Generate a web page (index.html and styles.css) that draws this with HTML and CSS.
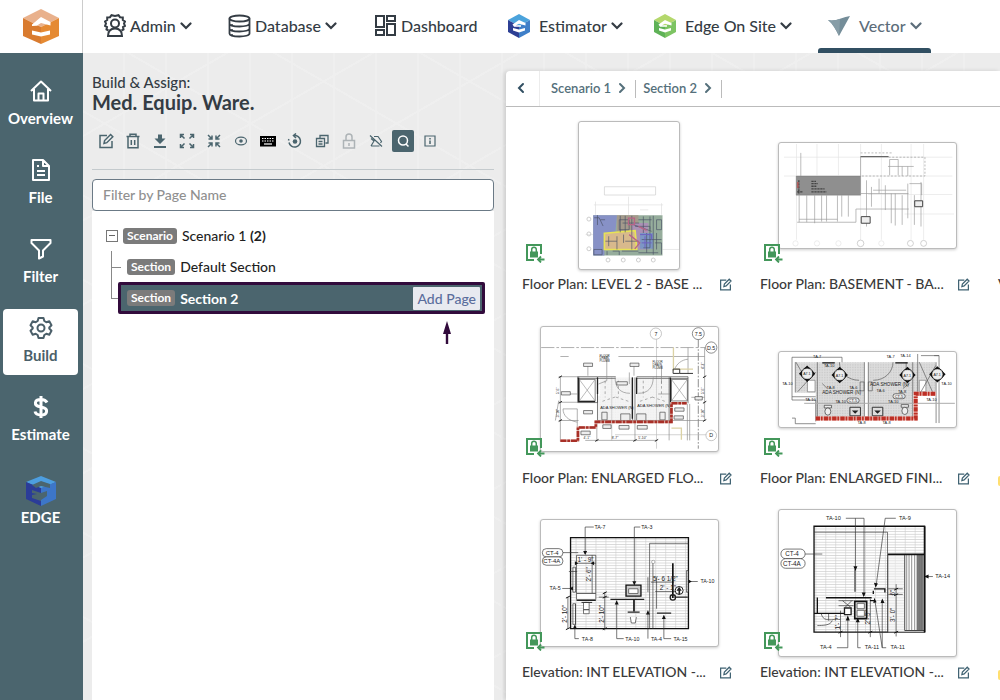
FILE: index.html
```html
<!DOCTYPE html>
<html lang="en">
<head>
<meta charset="utf-8">
<title>Build &amp; Assign</title>
<link rel="stylesheet" href="styles.css">
</head>
<body>
<svg class="defs" aria-hidden="true">
  <symbol id="chev" viewBox="0 0 12 8"><path d="M1.500 1.500 6 6l4.500-4.500" fill="none" stroke="currentColor" stroke-width="2.200" stroke-linecap="round"/></symbol>
  <symbol id="chev-right" viewBox="0 0 8 12"><path d="M2 2l4 4-4 4" fill="none" stroke="currentColor" stroke-width="2" stroke-linecap="round"/></symbol>
  <symbol id="edit" viewBox="0 0 16 16"><g fill="none" stroke="currentColor" stroke-width="1.500"><path d="M9 2.500H2v12h12V8"/><path d="M6 10.500l.6-3L12.600 1.500l2.200 2.200-6 6z"/></g></symbol>
  <symbol id="lock-in" viewBox="0 0 20 20"><path d="M9 17H2V2h14v9" fill="none" stroke="#43975a" stroke-width="2"/><path d="M5 8.500h8v6H5z" fill="#43975a"/><path d="M6.700 9V6.500a2.300 2.300 0 0 1 4.600 0V9" fill="none" stroke="#43975a" stroke-width="1.500"/><path d="M19.500 16.500H13M16 13.500l-3 3 3 3" fill="none" stroke="#43975a" stroke-width="1.800"/></symbol>
  <symbol id="mark" viewBox="0 0 24 24"><path d="M5.500 10.500 12 6l6.500 3v2.500L12 9.800l-3 1.500h5v1.400H7zM6 14l6 1.500 6-1.500v2.500L12 18.500 6 16.500z" fill="#fff"/></symbol>
  <pattern id="tile" width="30" height="8" patternUnits="userSpaceOnUse"><path d="M0 1h30" stroke="#aaa" stroke-width="1.500"/><path d="M1 0v8" stroke="#ccc" stroke-width="2"/></pattern>
  <pattern id="dots" width="5" height="5" patternUnits="userSpaceOnUse"><path d="M0 0h5v5H0z" fill="#dcdcdc"/><path d="M0 0h2v2H0z" fill="#bbb"/></pattern>
  <g id="target"><circle r="18" fill="#fff" stroke="#222" stroke-width="3"/><path d="M-25 0l10-10v20zM25 0 15-10v20zM0-25l-10 10h20zM0 25l-10-10h20z" fill="#111"/><circle r="16" fill="#eee" stroke="#333"/></g>
</svg>

<header class="top">
  <a class="brand" href="#" aria-label="Edge home">
    <svg width="38" height="36" viewBox="0 0 38 36"><path d="M19 0 37 9 19 18 1 9z" fill="#e9b18c"/><path d="M1 9l18 9v17L1 27z" fill="#d97b2f"/><path d="M37 9l-18 9v17l18-8z" fill="#e58a33"/><path d="M10 15.500 19 8l9.500 5v3.500L19 14l-4 2.500h4L10 17zM10 21.500l9 2 9-2v4l-9 2-9-2z" fill="#fff"/></svg>
  </a>
  <nav class="menu">
    <button class="menu-item"><svg width="22" height="24" viewBox="0 0 22 24" fill="none" stroke="currentColor" stroke-width="2"><path d="M4.500 16.500l-2-1 .5-2.500-2-1 1-2.500-1-2 2.200-1.500V3.500L6 3.200l1.500-2L11 2l3.500-.8 1.500 2 2.800.3V6L21 7.500l-1 2 1 2.500-2 1 .5 2.500-2 1"/><circle cx="11" cy="9.500" r="4"/><path d="M4 22c0-5 2.500-7.500 7-7.500s7 2.500 7 7.500z"/></svg><span>Admin</span><svg class="chev"><use href="#chev"/></svg></button>
    <button class="menu-item"><svg width="23" height="24" viewBox="0 0 23 24" fill="none" stroke="currentColor" stroke-width="1.800"><ellipse cx="11.500" cy="4.500" rx="10" ry="3"/><path d="M1.500 4.500v15c0 4 20 4 20 0v-15M1.500 9.500c0 4 20 4 20 0M1.500 14.500c0 4 20 4 20 0"/><path d="M4 10v1M4 15v1M4 20v1" stroke-width="1.500"/></svg><span>Database</span><svg class="chev"><use href="#chev"/></svg></button>
    <a class="menu-item" href="#"><svg width="23" height="23" viewBox="0 0 23 23" fill="none" stroke="currentColor" stroke-width="2"><path d="M2 2h8v11H2zM13 2h8v5h-8zM2 16h8v5H2zM13 10h8v11h-8z"/></svg><span>Dashboard</span></a>
    <button class="menu-item app"><svg width="24" height="24" viewBox="0 0 24 24"><path d="M12 0 23 6 12 12 1 6z" fill="#4ba3dc"/><path d="M1 6l11 6v12L1 18z" fill="#2d3f94"/><path d="M23 6l-11 6v12l11-6z" fill="#3f7fc8"/><use href="#mark"/></svg><span>Estimator</span><svg class="chev"><use href="#chev"/></svg></button>
    <button class="menu-item app"><svg width="24" height="24" viewBox="0 0 24 24"><path d="M12 0 23 6 12 12 1 6z" fill="#b4d86c"/><path d="M1 6l11 6v12L1 18z" fill="#5fb257"/><path d="M23 6l-11 6v12l11-6z" fill="#7dc463"/><use href="#mark"/></svg><span>Edge On Site</span><svg class="chev"><use href="#chev"/></svg></button>
    <button class="menu-item app active"><svg width="24" height="22" viewBox="0 0 24 22"><path d="M1 5c7 2 15-3 22-4L12 21C9 15 6 9 1 5z" fill="#748d99"/><path d="M1 5c4 1 9 0 12-1l-1 17C9 15 6 9 1 5z" fill="#879da7"/></svg><span>Vector</span><svg class="chev"><use href="#chev"/></svg></button>
  </nav>
</header>

<div class="shell">
  <nav class="side">
    <a href="#"><svg viewBox="0 0 24 24"><path d="M2 12 12 2.500 22 12M5 10v11.500h14V10M9.500 21v-6.500h5V21"/></svg>Overview</a>
    <a href="#"><svg viewBox="0 0 24 24"><path d="M4 2h10l6 6v14H4zM14 2v6h6M8 8h2M8 13h8M8 17h8"/></svg>File</a>
    <a href="#"><svg viewBox="0 0 24 24"><path d="M2.500 3h19v3L14 13.500v6l-4 2v-8L2.500 6z"/></svg>Filter</a>
    <a href="#" class="on"><svg viewBox="0 0 24 24"><path d="M9.500 2h5l.8 3 2 1.200 3-.9 2.200 4-2.200 2.200v1l2.200 2.200-2.200 4-3-.9-2 1.200-.8 3h-5l-.8-3-2-1.200-3 .9-2.200-4 2.200-2.200v-1L1.500 9.300l2.200-4 3 .9 2-1.200z"/><circle cx="12" cy="12" r="3.500"/></svg>Build</a>
    <a href="#"><svg viewBox="0 0 24 24"><path stroke-width="3" d="M18 7.500C17 5.500 15 4.500 12 4.500c-7 0-7.500 6-1 7.200l2 .5c7 1.500 5.500 7.800-1 7.800-3.500 0-5.500-1.500-6-3.500M12 1v22"/></svg>Estimate</a>
    <a href="#" class="edge"><svg viewBox="0 0 32 30"><g stroke="none"><path d="M1 6 16 0l15 6-15 7z" fill="#4d9ee0"/><path d="M1 6l15 6v5l-9-3v3l5 1-5 1v3l9 3v5L1 23z" fill="#2b3c98"/><path d="M31 6l-15 6v5l6-2v5l-6 4v6l15-7z" fill="#3d76c8"/><path d="M7 9l9-4 9 3v4l-9-2-5 2z" fill="#4b656e"/></g></svg>EDGE</a>
  </nav>

  <main class="work">
    <section class="left">
      <h1><span>Build &amp; Assign:</span>Med. Equip. Ware.</h1>
      <div class="tools">
        <button aria-label="Edit"><svg viewBox="0 0 16 16"><use href="#edit"/></svg></button>
        <button aria-label="Delete"><svg viewBox="0 0 16 16"><path d="M1.500 3.500h13M5 3V1.200h6V3M3 4v10.800h10V4M6.300 7v5M9.700 7v5"/></svg></button>
        <button aria-label="Download"><svg viewBox="0 0 16 16"><path d="M2 14h12" stroke-width="2"/><path d="M6 1.500h4v4h3.500L8 11 2.500 5.500H6z" fill="currentColor" stroke="none"/></svg></button>
        <button aria-label="Expand"><svg viewBox="0 0 16 16"><path d="M1.500 5V1.500H5M11 1.500h3.500V5M14.500 11v3.500H11M5 14.500H1.500V11M2 2l3.500 3.500M14 2l-3.500 3.500M14 14l-3.500-3.500M2 14l3.500-3.500"/></svg></button>
        <button aria-label="Collapse"><svg viewBox="0 0 16 16"><path d="M2.500 6H6V2.500M13.500 6H10V2.500M13.500 10H10v3.500M2.500 10H6v3.500M6 6 2 2M10 6l4-4M10 10l4 4M6 10l-4 4"/></svg></button>
        <button aria-label="View"><svg viewBox="0 0 16 16"><ellipse cx="8" cy="8" rx="5.500" ry="3.800" stroke-width="1.200"/><circle cx="8" cy="8" r="1.800" fill="currentColor" stroke="none"/></svg></button>
        <button aria-label="Keyboard"><svg viewBox="0 0 16 16"><path d="M0 3h16v10.500H0z" fill="#000" stroke="none"/><path d="M2 5.500h12M2 8h12" stroke="#fff" stroke-dasharray="1.500 1" stroke-width="1.200"/><path d="M4 11h8" stroke="#fff" stroke-width="1.200"/></svg></button>
        <button aria-label="Restore"><svg viewBox="0 0 16 16"><path d="M7 2.500a5.800 5.800 0 1 1-5 7"/><path d="M1.500 7.500c.2-1 .5-1.500 1-2.200" stroke-dasharray="1.500 1"/><path d="M9 .5 6.500 2.600 9 5"/><circle cx="8" cy="8.500" r="2.300" fill="currentColor" stroke="none"/></svg></button>
        <button aria-label="Copy"><svg viewBox="0 0 16 16"><path d="M6 5V2.500h8V10h-2.500M2.500 5.500h8v8h-8zM4.500 8.500h4M4.500 11h4" stroke-width="1.300"/></svg></button>
        <button aria-label="Lock" class="dim"><svg viewBox="0 0 16 16"><path d="M2.500 7.500h11v7.500h-11zM5 7V4a3 3 0 0 1 6 0v3M8 10v3"/></svg></button>
        <button aria-label="Hide shape"><svg viewBox="0 0 16 16"><path d="M2 2.500l12 11M3 13h8.500M3 13l3-5-3-2.500M6 3.500h4l3.500 5-1 1.500" stroke-width="1.200"/></svg></button>
        <button aria-label="Search" class="sel"><svg viewBox="0 0 16 16"><circle cx="8" cy="7.500" r="4.500"/><path d="M11 11l2.500 2.500"/></svg></button>
        <button aria-label="Info"><svg viewBox="0 0 16 16"><path d="M3 3h10v10H3z" stroke-width="1.200"/><path d="M8 5v1.500M8 7.500V11"/></svg></button>
      </div>
      <input class="filter" type="text" placeholder="Filter by Page Name" aria-label="Filter by Page Name">
      <div class="tree">
        <div class="node"><button class="toggle" aria-label="Collapse scenario"></button><span class="tag">Scenario</span><span>Scenario 1 <b>(2)</b></span></div>
        <div class="kids">
          <div class="node"><span class="tag">Section</span><span>Default Section</span></div>
          <div class="node picked"><span class="tag">Section</span><b>Section 2</b><button class="add">Add Page</button>
            <svg class="arrow" width="10" height="24" viewBox="0 0 10 24"><path d="M5 0 9 13H6.200v10H3.800V13H1z" fill="#320b3c"/></svg>
          </div>
        </div>
      </div>
    </section>

    <section class="right">
      <nav class="crumbs">
        <button class="back" aria-label="Back"><svg class="flip" width="8" height="12"><use href="#chev-right"/></svg></button>
        <a href="#">Scenario 1<svg width="8" height="12"><use href="#chev-right"/></svg></a>
        <a href="#">Section 2<svg width="8" height="12"><use href="#chev-right"/></svg></a>
      </nav>
      <div class="cards">
        <article class="card">
          <div class="pic"><svg class="thumb" width="102" height="149" viewBox="220 184 303 445">
            <path d="M297 380h155v25H297z" fill="none" stroke="#ccc" stroke-width="2"/>
            <path d="M270 425v40M370 410v55M470 430v35M265 435h210M240 525h25M473 570h50M405 450h25" stroke="#ddd" stroke-width="2"/>
            <path d="M263 466h210v122H263z" fill="#96ad9c"/><path d="M263 466h72l-5 54-33 2v66h-34z" fill="#8791c6"/>
            <path d="M335 466h65v55h-65z" fill="#a49a8c"/><path d="M380 490h50v80h-50z" fill="#aa91b5"/><path d="M405 520h40v48h-40z" fill="#7d96c4"/>
            <path d="M297 521l93-8 5 57h-98z" fill="#d8b98c" stroke="#e8e356" stroke-width="5"/>
            <path d="M266 474h15l12 25M342 480h30v30h-30zM380 468v102M390 500h45v65h-20M445 468v118M455 480h15v30h-15zM335 530v40M355 525v25M300 545h35M265 570h25v16h-25zM305 575v12M322 575h20v12M350 575h50M385 495l55 20M410 540h60M450 550h20v35M345 468v50M352 490h50M360 468v50M400 480h40M415 470v50M425 520v60M435 470v40M310 530v30M360 545h40M276 466v30M285 480h14M400 580h60M455 520v50" fill="none" stroke="#4b5366" stroke-width="2"/>
            <path d="M370 475h18v20h-18zM372 525l32 25-15 18M400 500l25 12" fill="none" stroke="#b86586" stroke-width="4"/><path d="M405 525h35v15M410 550h30M420 530v35" fill="none" stroke="#6d5fc0" stroke-width="3"/>
            <g fill="none" stroke="#ccc" stroke-width="3"><circle cx="250" cy="478" r="6"/><circle cx="250" cy="523" r="6"/><circle cx="250" cy="568" r="6"/><circle cx="308" cy="602" r="6"/><circle cx="354" cy="602" r="6"/><circle cx="400" cy="602" r="6"/><circle cx="445" cy="602" r="6"/></g>
          </svg><svg class="lock"><use href="#lock-in"/></svg></div>
          <h2>Floor Plan: LEVEL 2 - BASE ...</h2><button class="pen" aria-label="Rename page"><svg viewBox="0 0 16 16"><use href="#edit"/></svg></button>
        </article>
        <article class="card">
          <div class="pic"><svg class="thumb" width="179" height="107" viewBox="821 247 534 318">
            <g fill="none" stroke="#e4e4e4" stroke-width="2"><path d="M835 290h510M835 347h510M1090 403h255M1200 462h150M873 250v290M935 250v95M1000 250v95M1067 250v290M1130 250v290M1220 250v290M1258 250v290"/></g>
            <g fill="none" stroke="#bbb" stroke-width="2"><circle cx="870" cy="551" r="8" stroke="#e4e4e4"/><circle cx="935" cy="551" r="8" stroke="#e4e4e4"/><circle cx="1000" cy="551" r="8" stroke="#e4e4e4"/><circle cx="1067" cy="551" r="10"/><circle cx="1130" cy="551" r="8" stroke="#e4e4e4"/><circle cx="1218" cy="551" r="9"/><circle cx="1258" cy="551" r="9"/></g>
            <path d="M872 347h195v58H872z" fill="#8f8f8f" stroke="#666"/><path d="M880 360v40M918 363h14M918 370h20M918 378h15M918 386h40M918 395h46M875 395h18" stroke="#444" stroke-width="4" stroke-dasharray="7 2"/><path d="M877 365v18" stroke="#b55" stroke-width="4"/>
            <g fill="none" stroke="#999" stroke-width="2"><path d="M886 277v70M881 405v82M904 405v82M928 405v85M949 405v80M964 405v80M997 405v80M1010 405v65M1030 405v65M881 478h116M875 487h178v-40h160M1085 360v140M1100 380v60M1123 355v45M1142 375v75M1160 400v90M1172 400v97M1193 405v90M1210 370v105M1230 405v90M1250 365v135M1067 400h145M1067 288v60M1155 345v-48h26v48M1150 318h78M1193 318v29M1210 318v29M1105 390h100M1215 370h37v35"/></g>
            <path d="M1067 288h85" stroke="#666" stroke-width="4"/><path d="M1067 277h95M1152 290h110v57H1070" fill="none" stroke="#999" stroke-width="2" stroke-dasharray="6 5"/>
            <path d="M1069 470h27v20h-27zM1231 422h24v18h-24z" fill="#eee" stroke="#444" stroke-width="3"/>
          </svg><svg class="lock"><use href="#lock-in"/></svg></div>
          <h2>Floor Plan: BASEMENT - BA...</h2><button class="pen" aria-label="Rename page"><svg viewBox="0 0 16 16"><use href="#edit"/></svg></button>
        </article>
        <article class="card"><div class="pic"></div><h2>V</h2></article>

        <article class="card">
          <div class="pic"><svg class="thumb" width="179" height="126" viewBox="77 38 533 374">
            <path d="M77 100h495" stroke="#888" stroke-width="2" stroke-dasharray="40 6 8 6"/><path d="M551 75v330" stroke="#555" stroke-width="2" stroke-dasharray="25 5 5 5"/><path d="M425 75v330M290 190v190M300 363h275" stroke="#bbb" stroke-width="2"/>
            <g fill="#fff" stroke="#aaa" stroke-width="2"><circle cx="423" cy="58" r="17"/><circle cx="590" cy="365" r="16"/><circle cx="551" cy="58" r="18" stroke="#555"/><circle cx="590" cy="100" r="17" stroke="#555"/></g>
            <g class="ink" font-size="16"><text x="419" y="64">7</text><text x="540" y="64">7.5</text><text x="577" y="106">D.5</text><text x="584" y="371">D</text></g>
            <path d="M255 190h95v130H245v-75h10zM365 190h100v130H365z" fill="url(#dots)" opacity=".3"/>
            <g fill="none" stroke="#444" stroke-width="2"><path d="M187 188h115M187 193h115M365 188h155v80M365 193h155M187 188v78h60v-75M192 196h48v65h-48zM247 190v130h220M353 190v130M360 190v130M463 190v130M470 196h48v65h-48z"/></g>
            <path d="M192 196l48 65M240 196l-48 65M470 196l48 65M518 196l-48 65" stroke="#999" stroke-width="2"/>
            <g fill="none" stroke="#888" stroke-width="2"><path d="M135 188v195M130 188h60M130 265h60M130 320h60M143 285h43v55M143 285c0 20 15 35 43 40M300 190c0 30 15 48 45 48M415 190c0 30-15 48-45 48M250 210l25-10V125M218 155v30M357 155v30M160 127h-25M310 127h260M570 100v220M530 250h40M210 380h215M245 320h325M525 270v110M518 270v110M520 100v80M520 135c-20 2-35 15-40 30M440 155v55M120 320l10-60M245 320v63M360 320v63M463 320v60M162 240h30M343 175v35M430 240h40"/></g>
            <path d="M190 190v73h50M365 190v50M352 190v125M247 190v50M467 190v80" fill="none" stroke="#222" stroke-width="4"/>
            <path d="M476 100v70M480 165h55M470 343h30v35" fill="none" stroke="#dbd2a5" stroke-width="4"/><path d="M475 165h20v13h-20zM495 178h40" fill="none" stroke="#333" stroke-width="3"/>
            <path d="M262 262l42-14M340 262l-42-14M375 262l42-14M450 262l-42-14M270 200v50M310 200v50M385 200v50M440 200v50" stroke="#888" stroke-width="2" stroke-dasharray="8 8"/>
            <g fill="#eee" stroke="#444" stroke-width="2"><path d="M205 147h27v10h-27zM345 147h27v10h-27zM138 233h27v10h-27zM205 290h27v10h-27zM305 203h32v10h-32zM263 333h25v11h-25zM312 335h30v11h-30zM367 335h30v11h-30zM197 352h28v11h-28zM480 282h28v10h-28zM478 306h28v10h-28zM541 248h22v10h-22z"/><path d="M317 300h28v20h-28zM365 300h28v20h-28zM260 295h16v23h-16zM435 295h16v23h-16z"/></g>
            <g class="ink" font-size="12"><text x="255" y="284">ADA SHOWER (N)</text><text x="367" y="280">ADA SHOWER (N)</text></g><g class="ink" font-size="9"><text x="253" y="128">FLOOR</text><text x="253" y="136">DRAIN,</text><text x="253" y="144">PLUMB</text><text x="413" y="148">FLOOR</text><text x="413" y="156">DRAIN,</text><text x="413" y="164">PLUMB</text></g>
            <path d="M135 381h53v-40h54v-17h228v-56h46" fill="none" stroke="#deb0a8" stroke-width="8"/><path d="M135 381h53v-40h54v-17h228v-56h46" fill="none" stroke="#a82f27" stroke-width="8" stroke-dasharray="18 3 8 3"/>
            <g class="ink" font-size="10"><text x="205" y="376">4'-1"</text><text x="290" y="376">8'-7"</text><text x="370" y="376">5'-10"</text><text transform="translate(132 240) rotate(-90)">5'-6"</text><text transform="translate(132 310) rotate(-90)">3'-10"</text><text transform="translate(568 240) rotate(-90)">5'-6"</text><text transform="translate(568 310) rotate(-90)">3'-10"</text><text transform="translate(568 165) rotate(-90)">4'-2"</text></g>
            <path d="M130 191l10-6M130 268l10-6M130 323l10-6M565 191l10-6M565 268l10-6M565 323l10-6M240 383l10-6M355 383l10-6M420 383l10-6" stroke="#222" stroke-width="3"/>
          </svg><svg class="lock"><use href="#lock-in"/></svg></div>
          <h2>Floor Plan: ENLARGED FLO...</h2><button class="pen" aria-label="Rename page"><svg viewBox="0 0 16 16"><use href="#edit"/></svg></button>
        </article>
        <article class="card">
          <div class="pic"><svg class="thumb" width="179" height="77" viewBox="71 34 533 228">
            <path d="M118 65h210v168H180V158h-62zM340 65h205v92h-70v76H340z" fill="url(#dots)"/><path d="M155 120h23v35h-23zM495 120h20v35h-20z" fill="#fff" stroke="#777" stroke-width="2"/>
            <g fill="none" stroke="#555" stroke-width="2"><path d="M108 50h152v15M108 50v130h72v65M180 170h-72M108 235h10v17h62M328 65v175M340 65v175M490 40v115M500 45h55v205M546 65v185M555 45h-15M252 65c0 30 25 55 60 55M415 65c0 30-25 55-60 55M185 65v170M475 65v170M118 65v92M120 65l35 60M125 155l55-60M495 65l40 90M545 75l-45 80M315 125h12v27h-12zM340 125h12v27h-12zM455 65v50M200 130l15 15M465 130l-20 15"/></g>
            <path d="M145 190h458" stroke="#aaa" stroke-width="3"/><path d="M200 67h38M422 67h38" stroke="#111" stroke-width="4"/>
            <use href="#target" x="154" y="100"/><use href="#target" x="253" y="104"/><use href="#target" x="459" y="104"/><use href="#target" x="550" y="102"/>
            <g class="ink" font-size="11"><text x="142" y="105">A7.1</text><text x="241" y="109">A7.1</text><text x="447" y="109">A7.1</text><text x="538" y="107">A7.1</text></g><g class="ink" font-size="12"><text x="172" y="52">TA-7</text><text x="205" y="80">TA-10</text><text x="395" y="52">TA-7</text><text x="437" y="50">TA-14</text><text x="78" y="134">TA-10</text><text x="213" y="145">TA-8</text><text x="282" y="145">TA-6</text><text x="365" y="156">TA-6</text><text x="430" y="160">TA-8</text><text x="240" y="190">TA-10</text><text x="400" y="190">TA-10</text><text x="148" y="182">TA-10</text><text x="307" y="254">TA-8</text><text x="383" y="254">TA-8</text><text x="562" y="134">TA-10</text><text x="516" y="182">TA-10</text></g>
            <g class="ink" font-size="14"><text x="200" y="161">ADA SHOWER (N)</text><text x="345" y="137">ADA SHOWER (N)</text></g>
            <g fill="#eee" stroke="#333" stroke-width="2"><rect x="275" y="174" width="37" height="15" rx="7"/><rect x="415" y="161" width="37" height="15" rx="7"/><path d="M284 202h32v26h-32zM352 202h32v26h-32z" fill="#ddd" stroke-width="3"/><path d="M206 196h22v8h-22zM440 194h22v8h-22z"/><ellipse cx="217" cy="215" rx="9" ry="11"/><ellipse cx="451" cy="213" rx="9" ry="11"/></g>
            <path d="M290 212h20l-10 10zM358 212h20l-10 10z" fill="#222"/>
            <g class="ink" font-size="12"><text x="280" y="186">CT-5</text><text x="420" y="173">CT-5</text></g>
            <path d="M180 236h304v-75h62" fill="none" stroke="#e9aaa2" stroke-width="12"/><path d="M180 236h304v-75h62" fill="none" stroke="#bd2f25" stroke-width="12" stroke-dasharray="13 3 5 4"/>
          </svg><svg class="lock"><use href="#lock-in"/></svg></div>
          <h2>Floor Plan: ENLARGED FINI...</h2><button class="pen" aria-label="Rename page"><svg viewBox="0 0 16 16"><use href="#edit"/></svg></button>
        </article>
        <article class="card"><div class="pic"></div><span class="flag"></span></article>

        <article class="card">
          <div class="pic"><svg class="thumb" width="179" height="128" viewBox="76 48 533 379">
            <path d="M165 101h355v274H165z" fill="url(#tile)" stroke="#111" stroke-width="4"/>
            <g fill="none" stroke="#333" stroke-width="2"><path d="M403 375V118h117M142 146h46M235 69h-26v80M375 69h-18v175M520 233h28M140 254h30M190 405h-12v-40M325 405h-21V290M398 405v-85M468 405h-22v-70M183 154h58v115h-58zM230 154v115M183 178h58M268 265v115M157 280v95M160 203h25M180 300v65M413 175v200M424 220v95M407 235h70M420 263h70M250 280h30M398 220v45M172 190h8v75h-8zM172 300h8v62h-8zM514 200h6v65h-6z"/></g>
            <path d="M183 290h58M285 287h102M337 325h36M425 328h43M478 280h40" fill="none" stroke="#222" stroke-width="4"/><path d="M473 178v105M356 288v35" stroke="#111" stroke-width="5"/>
            <path d="M183 269h58v18h-58z" fill="#fff" stroke="#333" stroke-width="2"/><path d="M332 244h45v33h-45z" fill="#ccc" stroke="#111" stroke-width="4"/><path d="M340 255h28v14h-28zM204 296h17v34h-17zM345 340l3 18h12l3-18" fill="#fff" stroke="#333" stroke-width="2"/><path d="M198 296h32M204 318h17" stroke="#333" stroke-width="3"/>
            <circle cx="492" cy="260" r="12" fill="#fff" stroke="#222" stroke-width="3"/><circle cx="473" cy="281" r="8" fill="none" stroke="#222" stroke-width="4"/><path d="M492 249l8 12h-16zM490 260h5v12h-5z" fill="#222"/><circle cx="414" cy="174" r="5" fill="#fff" stroke="#333"/>
            <g fill="#111"><path d="M203 141h12l-6 12zM351 232h12l-6 12zM298 302h12l-6-12zM392 332h12l-6-12zM440 346h12l-6-12zM520 227v12l10-6zM172 248v12l-10-6zM172 375h12l-6-12zM178 172v12l10-6zM236 172v12l-10-6z"/></g>
            <g fill="#fff" stroke="#333" stroke-width="2"><rect x="80" y="134" width="62" height="25" rx="12"/><rect x="80" y="159" width="62" height="25" rx="12"/></g>
            <g class="ink" font-size="18"><text x="90" y="153">CT-4</text><text x="83" y="178">CT-4A</text></g><g class="ink" font-size="16"><text x="237" y="75">TA-7</text><text x="378" y="75">TA-3</text><text x="102" y="259">TA-5</text><text x="199" y="411">TA-8</text><text x="330" y="411">TA-10</text><text x="407" y="411">TA-4</text><text x="475" y="411">TA-15</text><text x="556" y="239">TA-10</text></g><g class="ink" font-size="19"><text x="186" y="174">1' - 9"</text><text x="413" y="231">5'- 6 1/2"</text><text x="434" y="259">2' - 1"</text><text transform="translate(228 233) rotate(-90)">2'- 6"</text><text transform="translate(154 357) rotate(-90)">2'- 10"</text><text transform="translate(265 357) rotate(-90)">2'- 10"</text></g>
            <path d="M151 283l12-6M151 378l12-6M262 283l12-6M262 378l12-6M262 270l12-6" stroke="#111" stroke-width="3"/>
          </svg><svg class="lock"><use href="#lock-in"/></svg></div>
          <h2>Elevation: INT ELEVATION -...</h2><button class="pen" aria-label="Rename page"><svg viewBox="0 0 16 16"><use href="#edit"/></svg></button>
        </article>
        <article class="card">
          <div class="pic"><svg class="thumb" width="179" height="148" viewBox="71 16 533 441">
            <path d="M176 65h334v320H176z" fill="url(#tile)" stroke="#111" stroke-width="4"/>
            <path d="M399 150h111v235H399z" fill="#f1f1f1" opacity=".5"/><path d="M450 152h60v228h-60z" fill="#fff"/><path d="M456 152v228M463 152v228M471 152v228M480 152v228" stroke="#555" stroke-width="2"/><path d="M485 152h24v228h-24z" fill="#aaa"/><path d="M490 152v228M496 152v228M502 152v228M450 152v228h60" fill="none" stroke="#444" stroke-width="3"/>
            <path d="M399 150h111M510 65v320" stroke="#111" stroke-width="5"/>
            <g fill="none" stroke="#333" stroke-width="2"><path d="M399 150v235M176 83h222v302M149 149h52M272 41h55v235M301 41v150M423 41h-32l-27 200M520 217h15M245 432h33v-90M317 432h-9v-85M360 290l22 142M382 290v142h12M346 285v115M424 240v158M400 271h44M400 254h44M256 320v80M250 290h45M250 305h45"/></g>
            <path d="M300 195v68" stroke="#777" stroke-width="6"/><path d="M176 328h98M186 280v48M212 281h138M357 254h35M355 260v10M390 255v10M345 290h15" stroke="#111" stroke-width="4"/>
            <path d="M299 292h36v52h-36z" fill="#ddd" stroke="#111" stroke-width="5"/><path d="M306 298h22v16h-22zM306 319h22v18h-22z" fill="#fff" stroke="#333" stroke-width="2"/><path d="M268 312h20v20h-20z" fill="#fff" stroke="#222" stroke-width="4"/><path d="M262 290l25 20M290 290l-20 20M198 330c5 20 20 20 50 15M186 365c15 0 40 0 45-15M220 330v20" fill="none" stroke="#333" stroke-width="2"/>
            <g fill="#111"><path d="M295 186h12l-6 14zM320 265h12l-6 14zM357 236l12 2-7 13zM522 211v12l-14-6zM272 350h12l-6-16zM302 355h12l-6-14zM355 297l10-2-7-14zM377 297h12l-7-14z"/></g>
            <g fill="#fff" stroke="#333" stroke-width="2"><rect x="76" y="134" width="73" height="29" rx="14"/><rect x="76" y="163" width="73" height="29" rx="14"/></g>
            <g class="ink" font-size="19"><text x="89" y="155">CT-4</text><text x="82" y="185">CT-4A</text><text transform="translate(422 354) rotate(-90)">3'- 0"</text><text transform="translate(422 274) rotate(-90)">6"</text><text transform="translate(254 377) rotate(-90)">1'- 7"</text><text transform="translate(344 362) rotate(-90)">2'- 5"</text></g><g class="ink" font-size="17"><text x="212" y="46">TA-10</text><text x="433" y="46">TA-9</text><text x="542" y="222">TA-14</text><text x="194" y="437">TA-4</text><text x="329" y="437">TA-11</text><text x="407" y="437">TA-11</text></g>
            <path d="M418 258l12-6M418 275l12-6M418 388l12-6M250 388l12-6M340 388l12-6" stroke="#111" stroke-width="3"/>
          </svg><svg class="lock"><use href="#lock-in"/></svg></div>
          <h2>Elevation: INT ELEVATION -...</h2><button class="pen" aria-label="Rename page"><svg viewBox="0 0 16 16"><use href="#edit"/></svg></button>
        </article>
        <article class="card"><div class="pic"></div><span class="flag"></span></article>
      </div>
    </section>
  </main>
</div>
</body>
</html>
```
FILE: styles.css
```css
* { box-sizing: border-box; }
body {
  margin: 0;
  height: 100vh;
  display: flex;
  flex-direction: column;
  overflow: hidden;
  font-family: Lato, "Open Sans", sans-serif;
  font-weight: 500;
  font-size: 14px;
  color: #343c44;
  background: #ececec;
}
button { font: inherit; color: inherit; background: none; border: 0; padding: 0; cursor: pointer; }
a { color: inherit; text-decoration: none; }
.defs { position: absolute; width: 0; height: 0; }

.top { display: flex; flex: 0 0 53px; background: #fff; }
.brand { width: 83px; display: flex; align-items: center; justify-content: center; border-right: 1px solid #ccc; }
.menu { display: grid; grid-template-columns: 124px 146px 124px 146px 174px 122px; padding-left: 12px; }
.menu-item { display: flex; align-items: center; gap: 4px; padding: 0 0 2px 9px; font-size: 16px; white-space: nowrap; }
.menu-item > svg:first-child { flex: none; }
.menu-item.app > svg:first-child { margin-right: 4px; }
.menu-item.app { padding-left: 18px; }
.menu-item.app.active { padding-left: 9px; margin-left: 9px; }
.chev { width: 12px; height: 8px; flex: none; }
.active { color: #5c6d7a; position: relative; }
.active::after { content: ""; position: absolute; left: 0; right: 0; bottom: 0; height: 5px; background: #314f62; border-radius: 3px 3px 0 0; }

.shell { flex: 1; display: flex; min-height: 0; }
.side { flex: 0 0 83px; background: #4b656e; color: #fff; display: flex; flex-direction: column; gap: 13px; padding: 19px 5px 19px 3px; }
.side a { display: flex; flex-direction: column; align-items: center; gap: 5px; height: 66px; padding-top: 7px; border-radius: 4px; font-size: 15px; line-height: 20px; font-weight: 700; }
.side svg { width: 24px; height: 24px; fill: none; stroke: currentColor; stroke-width: 2; stroke-linejoin: round; }
.side .on { background: #fff; color: #4b5f69; }
.side .edge { gap: 1px; padding-top: 9px; }
.side .edge svg { width: 32px; height: 30px; }

.work {
  flex: 1;
  min-width: 0;
  display: flex;
  gap: 12px;
  padding-left: 9px;
  background-image:
    repeating-linear-gradient(90deg, transparent 0 40px, #efefef 40px 42px),
    repeating-linear-gradient(30deg, transparent 0 71px, #efefef 71px 73px),
    repeating-linear-gradient(150deg, transparent 0 71px, #efefef 71px 73px);
}
.left { flex: 0 0 402px; display: flex; flex-direction: column; }
h1 { margin: 0; padding-top: 19px; font-size: 20px; line-height: 21px; font-weight: 700; }
h1 span { display: block; font-size: 15px; line-height: 20px; font-weight: 500; }
.tools { display: flex; align-items: center; gap: 5px; height: 57px; padding-left: 3px; border-bottom: 1px solid #c4cacd; color: #4b656e; }
.tools button { width: 22px; height: 22px; border-radius: 2px; display: flex; align-items: center; justify-content: center; }
.tools svg { width: 16px; height: 16px; fill: none; stroke: currentColor; stroke-width: 1.500; }
.tools .dim { color: #adb3b6; }
.tools .sel { background: #4b656e; color: #fff; }
.filter { height: 32px; margin-top: 9px; padding: 0 10px 2px; font: inherit; border: 1px solid #6b7a86; border-radius: 4px; background: #fff; }
.filter::placeholder { color: #909090; }
.tree { flex: 1; background: #fff; color: #1f1f1f; padding: 9px 9px 0 14px; }
.node { display: flex; align-items: center; gap: 5px; height: 31px; }
.toggle { width: 12px; height: 12px; border: 1px solid #777; background: linear-gradient(#666, #666) center / 6px 1px no-repeat; }
.tag { background: #7b7b7b; color: #fff; font-size: 12px; font-weight: 700; line-height: 16px; padding: 0 4px; border-radius: 3px; }
.kids { margin-left: 5px; padding-left: 7px; background: linear-gradient(#888, #888) 0 0 / 1px 48px no-repeat, linear-gradient(#888, #888) 0 16px / 10px 1px no-repeat, linear-gradient(#888, #888) 0 47px / 10px 1px no-repeat; }
.kids .node { padding-left: 9px; }
.kids .picked { position: relative; height: 32px; padding: 0 2px 0 6px; color: #fff; background: #4b656e; border: 3px solid #320b3c; border-radius: 2px; }
.add { margin-left: auto; height: 23px; padding: 0 4px; background: #e8eaf0; color: #5a6d9c; font-weight: 500; border-radius: 1px; }
.arrow { position: absolute; right: 30px; top: 36px; }

.right { flex: 1; min-width: 0; margin-top: 18px; background: #fff; border-radius: 4px 0 0 0; box-shadow: -2px 0 4px #0002; overflow: hidden; }
.crumbs { display: flex; align-items: center; height: 36px; border-bottom: 1px solid #bbb; font-size: 13px; font-weight: 600; color: #55707b; }
.back { width: 34px; height: 35px; padding-right: 3px; border-right: 1px solid #ececec; color: #314f62; }
.flip { transform: scaleX(-1); }
.crumbs a { display: flex; align-items: center; gap: 7px; padding: 0 9px 2px 7px; height: 18px; border-right: 1px solid #bbb; }
.crumbs .back + a { padding-left: 11px; }
.cards { display: grid; grid-template-columns: repeat(3, 214px); gap: 20px 24px; padding: 13px 0 0 16px; }
.card { display: grid; grid-template-columns: 1fr 17px; align-items: center; row-gap: 4px; }
.pic { grid-column: 1 / -1; height: 150px; display: flex; align-items: center; justify-content: center; position: relative; }
.thumb { background: #fff; border: 1px solid #bbb; border-radius: 3px; box-shadow: 0 1px 3px #0003; }
.lock { position: absolute; left: 3px; bottom: 7px; width: 20px; height: 20px; }
.card h2 { margin: 0; font-size: 14px; line-height: 20px; font-weight: 500; white-space: nowrap; color: #3a3a3a; }
.pen svg { width: 13px; height: 13px; display: block; color: #3f6272; }
.flag { width: 10px; height: 10px; border-radius: 2px; background: #ffdf70; }
.ink { fill: #222; font-family: "Liberation Sans", Arial, sans-serif; }
```
